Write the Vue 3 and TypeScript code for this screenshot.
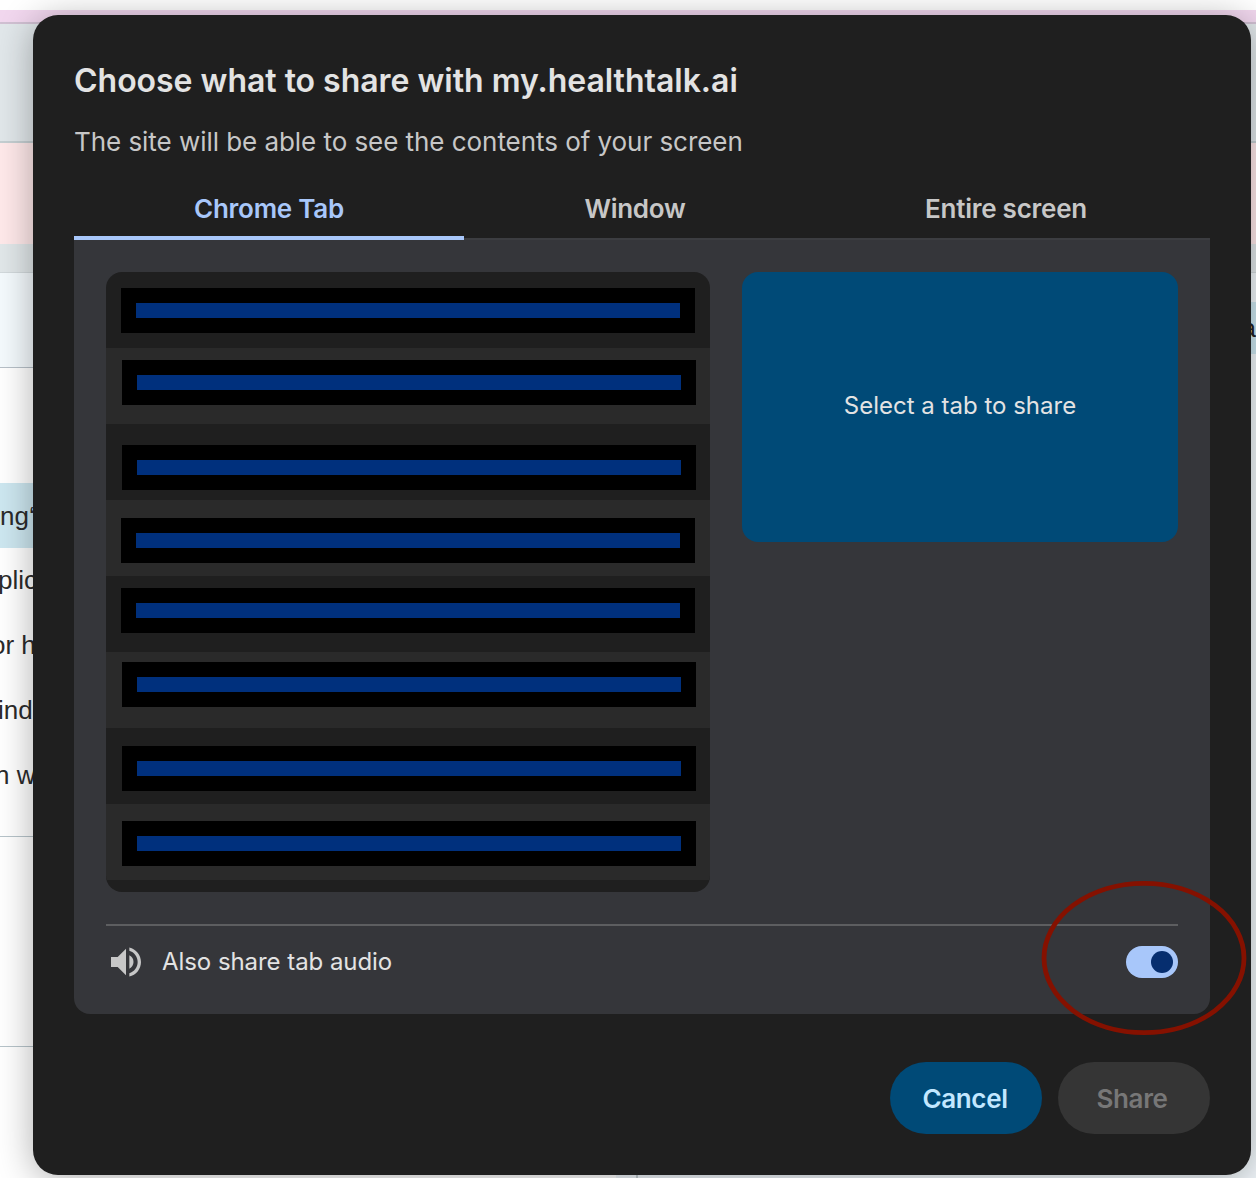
<script setup lang="ts">
import { ref } from 'vue'

interface Bar { left: number; top: number }

const tabs = ['Chrome Tab', 'Window', 'Entire screen']
const active = ref(0)
const audio = ref(true)
const bars: Bar[] = [
  { left: 15, top: 16 },
  { left: 16, top: 12 },
  { left: 16, top: 21 },
  { left: 15, top: 18 },
  { left: 15, top: 12 },
  { left: 16, top: 10 },
  { left: 16, top: 18 },
  { left: 16, top: 17 },
]
const snippets = ['plic', 'or h', 'ind', 'n w']
</script>

<template>
  <div class="page">
    <div class="band white"></div>
    <div class="band pink"></div>
    <div class="band slate"></div>
    <div class="band rose"></div>
    <div class="band grey"></div>
    <div class="columns">
      <div class="left">
        <div class="pale"></div>
        <div class="blank"></div>
        <div class="marked"><span class="t0">ng‘</span></div>
        <div v-for="(s, i) in snippets" :key="s" class="line"><span :class="'t' + (i + 1)">{{ s }}</span></div>
        <div class="section one"></div>
        <div class="section two"></div>
      </div>
      <div class="right">
        <div class="chip">a</div>
      </div>
    </div>

    <main class="dialog">
      <h1>Choose what to share with my.healthtalk.ai</h1>
      <p class="sub">The site will be able to see the contents of your screen</p>
      <nav class="tabs">
        <button v-for="(t, i) in tabs" :key="t" :class="['tab', 'tab' + i, { active: active === i }]" @click="active = i">
          <span>{{ t }}</span>
        </button>
      </nav>
      <section class="panel">
        <div class="content">
          <div class="list">
            <div v-for="(b, i) in bars" :key="i" class="row" :style="{ paddingLeft: b.left + 'px', paddingTop: b.top + 'px' }">
              <div class="bar"></div>
            </div>
          </div>
          <div class="preview"><span>Select a tab to share</span></div>
        </div>
        <div class="audio">
          <svg width="40" height="40" viewBox="0 0 24 24" fill="#c7c7c7">
            <path d="M3 9v6h4l5 5V4L7 9H3zm13.5 3A4.5 4.5 0 0 0 14 7.97v8.05c1.48-.73 2.5-2.25 2.5-4.02zM14 3.23v2.06c2.89.86 5 3.54 5 6.71s-2.11 5.85-5 6.71v2.06c4.01-.91 7-4.49 7-8.77s-2.99-7.86-7-8.77z" />
          </svg>
          <span class="label">Also share tab audio</span>
          <button class="toggle" :class="{ on: audio }" aria-label="Also share tab audio" @click="audio = !audio"><i></i></button>
        </div>
      </section>
      <footer>
        <button class="btn cancel"><span>Cancel</span></button>
        <button class="btn share" disabled><span>Share</span></button>
      </footer>
    </main>

    <svg class="ring" width="208" height="158" viewBox="0 0 208 158">
      <ellipse cx="104" cy="79" rx="100" ry="74.7" fill="none" stroke="#851100" stroke-width="4.8" />
    </svg>
  </div>
</template>

<style>
body { margin: 0; overflow: hidden; }
</style>

<style scoped>
* { box-sizing: border-box; }
button { border: 0; padding: 0; background: none; font: inherit; letter-spacing: inherit; }
.page {
  position: relative; width: 1256px; height: 1178px; overflow: hidden; background: #fff;
  display: flex; flex-direction: column;
  font-family: Inter, "Liberation Sans", sans-serif;
}
.band { flex: none; }
.white { height: 10px; }
.pink { height: 14px; background: #f1d7ee; border-bottom: 2px solid #d0c0d2; }
.slate { height: 119px; background: #e1e7ea; border-bottom: 2px solid #c5cfd2; }
.rose { height: 101px; background: #ffe9ea; }
.grey { height: 29px; background: #e1e7e9; border-bottom: 1px solid #d2d9dc; }
.columns { flex: 1; display: flex; }
.left { width: 616px; font: 26px/65px "Liberation Sans", Arial, sans-serif; color: #2b2b2b; white-space: nowrap; }
.pale { height: 95px; background: #f4fafd; border-bottom: 1px solid #b7c0c8; }
.blank { height: 115px; }
.marked { height: 65px; padding-top: 1px; background: #cde7f0; }
.line { height: 65px; }
.left span { display: inline-block; line-height: 65px; }
.t0 { margin-left: 0; }
.t1 { margin-left: -2px; }
.t2 { margin-left: -9px; }
.t3 { margin-left: -2px; }
.t4 { margin-left: -5px; }
.section.one { height: 29px; border-bottom: 1px solid #b7c4ca; }
.section.two { height: 210px; border-bottom: 1px solid #b7c4ca; }
.right { flex: 1; background: linear-gradient(#c2ccd1, #c2ccd1) 20px 0 / 2px 100% no-repeat #f0f6fa; padding-top: 29px; }
.chip {
  height: 52px; background: #cde7f0; text-align: right; overflow: hidden;
  font: 26px/52px "Liberation Sans", Arial, sans-serif; color: #222;
}
.dialog {
  position: absolute; left: 33px; top: 15px; width: 1218px; height: 1160px;
  padding: 41px; border-radius: 25px; background: #1f1f1f; color: #e3e3e3;
  box-shadow: 0 4px 36px rgba(0, 0, 0, .32);
  display: flex; flex-direction: column;
}
h1 { margin: 0; height: 50px; font-size: 32px; line-height: 50px; font-weight: 600; letter-spacing: -.02px; white-space: nowrap; }
.sub { margin: 14px 0 0; height: 42px; font-size: 26px; line-height: 43px; letter-spacing: -.05px; color: #c7c7c7; white-space: nowrap; }
.tabs { height: 78px; display: flex; border-bottom: 2px solid #3c3d41; color: #c7c7c7; font-size: 26px; font-weight: 600; letter-spacing: -.25px; }
.tab { height: 78px; padding-top: 20px; border-bottom: 4px solid transparent; line-height: 34px; white-space: nowrap; color: inherit; }
.tab0 { width: 390px; }
.tab1 { width: 342px; }
.tab2 { flex: 1; padding-right: 4px; }
.tab.active { color: #a8c7fa; border-color: #a8c7fa; }
.panel { height: 774px; padding: 32px; border-radius: 0 0 16px 16px; background: #35363a; }
.content { display: flex; gap: 32px; height: 652px; }
.list { width: 604px; height: 620px; border-radius: 16px; overflow: hidden; background: #1f1f1f; }
.row { height: 76px; }
.row:nth-child(even) { background: #2a2a2a; }
.bar { width: 574px; height: 45px; background: #00307d; border: 15px solid #000; }
.preview {
  width: 436px; height: 270px; border-radius: 16px; background: #004a77; padding-bottom: 4px;
  display: flex; align-items: center; justify-content: center; font-size: 24px; white-space: nowrap;
}
.audio { display: flex; align-items: center; border-top: 2px solid #5d5e60; height: 74px; }
.label { margin-left: 16px; padding-bottom: 2px; font-size: 24px; letter-spacing: -.06px; white-space: nowrap; }
.toggle { margin-left: auto; width: 52px; height: 32px; border-radius: 16px; padding: 5px; background: #5f6368; display: flex; }
.toggle i { width: 22px; height: 22px; border-radius: 50%; background: #062e6f; }
.toggle.on { justify-content: flex-end; background: #a8c7fa; }
footer { margin-top: 48px; display: flex; justify-content: flex-end; gap: 16px; }
.btn { width: 152px; height: 72px; border-radius: 36px; font-size: 26px; font-weight: 600; letter-spacing: -.35px; padding-right: 2px; }
.cancel { background: #004a77; color: #c2e7ff; }
.share { background: #353535; color: #777; padding-right: 4px; }
.ring { position: absolute; left: 1040px; top: 879px; pointer-events: none; }
</style>
